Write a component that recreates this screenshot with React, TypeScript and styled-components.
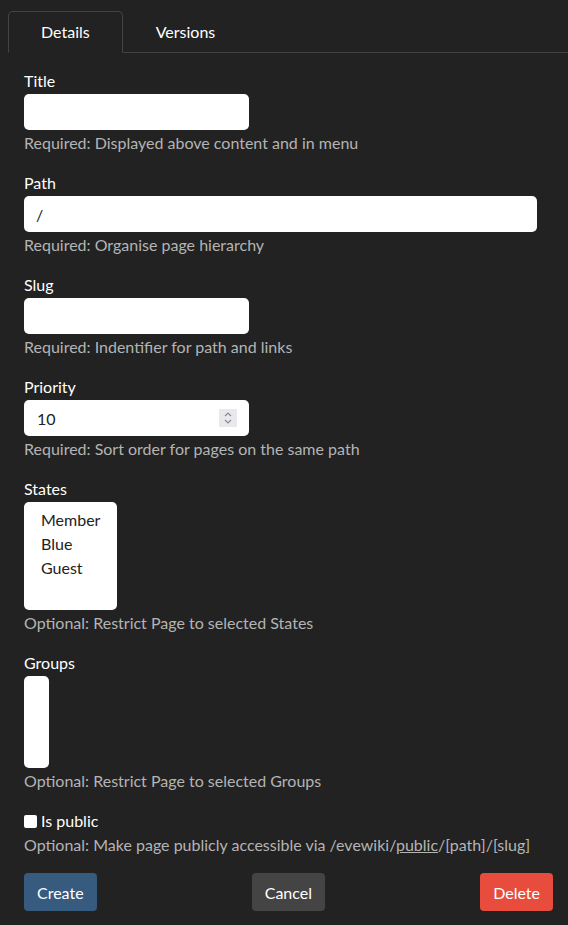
import React from "react";
import styled, { createGlobalStyle } from "styled-components";

const GlobalStyle = createGlobalStyle`
    html, body {
        margin: 0;
        padding: 0;
        background: #222222;
    }
    body {
        font-family: Lato, "Open Sans", "Liberation Sans", sans-serif;
        font-size: 16px;
        line-height: 24px;
        color: #ffffff;
    }
    * {
        box-sizing: border-box;
    }
`;

const Page = styled.div`
    padding-top: 11px;
`;

const TabBar = styled.ul`
    display: flex;
    margin: 0 0 0 8px;
    padding: 0;
    list-style: none;
    border-bottom: 1px solid #444444;
`;

const Tab = styled.li<{ $active?: boolean }>`
    height: 42px;
    margin-bottom: -1px;
    padding: 8px 32px 0 32px;
    border: 1px solid ${props => (props.$active ? "#444444" : "transparent")};
    border-bottom-color: ${props => (props.$active ? "#222222" : "transparent")};
    border-radius: 5px 5px 0 0;
    color: #ffffff;
    cursor: pointer;
`;

const Form = styled.form`
    display: flex;
    flex-direction: column;
    padding: 16px 15px 0 24px;
`;

const Group = styled.div`
    display: flex;
    flex-direction: column;
    align-items: flex-start;
    margin-bottom: 16px;
`;

const Label = styled.label`
    display: block;
    margin-bottom: 1px;
    color: #ffffff;
`;

const Help = styled.div<{ $tight?: boolean }>`
    margin-top: ${props => (props.$tight ? 0 : 1)}px;
    color: #b4b4b4;
`;

const Input = styled.input<{ $width?: number }>`
    width: ${props => props.$width || 225}px;
    height: 36px;
    padding: 0 12px;
    border: none;
    border-radius: 5px;
    background: #ffffff;
    color: #222222;
    font-family: inherit;
    font-size: 16px;
    outline: none;
`;

const NumberBox = styled.div`
    display: flex;
    align-items: center;
    width: 225px;
    height: 36px;
    padding: 0 12px 0 13px;
    border-radius: 5px;
    background: #ffffff;
`;

const NumberField = styled.input`
    flex: 1;
    min-width: 0;
    padding: 0;
    border: none;
    background: transparent;
    color: #222222;
    font-family: inherit;
    font-size: 16px;
    outline: none;
`;

const Spinner = styled.span`
    display: flex;
    align-items: center;
    justify-content: center;
    width: 18px;
    height: 18px;
    background: #e9e9ed;
`;

const ListBox = styled.div<{ $width: number; $height: number }>`
    width: ${props => props.$width}px;
    height: ${props => props.$height}px;
    padding: 6px 0 0 17px;
    border-radius: 5px;
    background: #ffffff;
    color: #222222;
`;

const Option = styled.div`
    line-height: 24px;
`;

const CheckRow = styled.label`
    display: flex;
    align-items: center;
    color: #ffffff;
`;

const Check = styled.input`
    appearance: none;
    width: 13px;
    height: 13px;
    margin: 0 4px 0 0;
    border-radius: 2px;
    background: #ffffff;
`;

const Link = styled.span`
    text-decoration: underline;
`;

const Buttons = styled.div`
    display: flex;
    justify-content: space-between;
`;

const Button = styled.button<{ $color: string }>`
    height: 38px;
    padding: 0 13px;
    border: none;
    border-radius: 4px;
    background: ${props => props.$color};
    color: #ffffff;
    font-family: inherit;
    font-size: 16px;
    cursor: pointer;
`;

const SpinIcon = () => (
    <svg width="10" height="14" viewBox="0 0 10 14" fill="none" stroke="#8a8a90" strokeWidth="1.2">
        <path d="M2 5 L5 2 L8 5" />
        <path d="M2 9 L5 12 L8 9" />
    </svg>
);

const States = ["Member", "Blue", "Guest"];

export default function App() {
    return (
        <Page>
            <GlobalStyle />
            <TabBar>
                <Tab $active>Details</Tab>
                <Tab>Versions</Tab>
            </TabBar>
            <Form onSubmit={e => e.preventDefault()}>
                <Group>
                    <Label>Title</Label>
                    <Input type="text" />
                    <Help>Required: Displayed above content and in menu</Help>
                </Group>
                <Group>
                    <Label>Path</Label>
                    <Input type="text" defaultValue="/" $width={513} />
                    <Help>Required: Organise page hierarchy</Help>
                </Group>
                <Group>
                    <Label>Slug</Label>
                    <Input type="text" />
                    <Help>Required: Indentifier for path and links</Help>
                </Group>
                <Group>
                    <Label>Priority</Label>
                    <NumberBox>
                        <NumberField type="text" defaultValue="10" />
                        <Spinner><SpinIcon /></Spinner>
                    </NumberBox>
                    <Help>Required: Sort order for pages on the same path</Help>
                </Group>
                <Group>
                    <Label>States</Label>
                    <ListBox role="listbox" $width={93} $height={108}>
                        {States.map(s => <Option key={s}>{s}</Option>)}
                    </ListBox>
                    <Help>Optional: Restrict Page to selected States</Help>
                </Group>
                <Group>
                    <Label>Groups</Label>
                    <ListBox role="listbox" $width={25} $height={92} />
                    <Help>Optional: Restrict Page to selected Groups</Help>
                </Group>
                <Group>
                    <CheckRow>
                        <Check type="checkbox" />
                        Is public
                    </CheckRow>
                    <Help $tight>Optional: Make page publicly accessible via /evewiki/<Link>public</Link>/[path]/[slug]</Help>
                </Group>
                <Buttons>
                    <Button $color="#375a7f">Create</Button>
                    <Button $color="#444444">Cancel</Button>
                    <Button $color="#e74c3c">Delete</Button>
                </Buttons>
            </Form>
        </Page>
    );
}
